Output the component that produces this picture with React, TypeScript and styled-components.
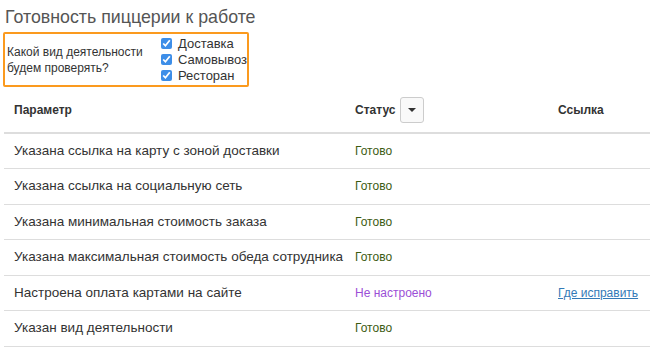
import * as React from 'react';
import styled, {createGlobalStyle} from 'styled-components';

const Global = createGlobalStyle`
    body {
        margin: 0;
        background: #fff;
        font-family: "Liberation Sans", Arial, sans-serif;
        color: #333;
    }
`;

const Page = styled.div`
    padding: 0 0 0 4px;
`;

const Title = styled.h1`
    margin: 0;
    padding: 6px 0 0 1px;
    font-size: 17.8px;
    font-weight: normal;
    line-height: 22px;
    color: #555;
`;

const FilterBox = styled.div`
    display: flex;
    align-items: center;
    width: 240px;
    height: 51px;
    margin: 4px 0 0 -1px;
    padding: 0 0 0 2px;
    border: 2px solid #fb9a1e;
    border-radius: 2px;
`;

const Question = styled.div`
    width: 156px;
    font-size: 12px;
    line-height: 16px;
`;

const Options = styled.div`
    display: flex;
    flex-direction: column;
`;

const Option = styled.label`
    display: flex;
    align-items: center;
    gap: 6px;
    height: 16px;
    font-size: 13px;
`;

const Check = styled.input`
    width: 11px;
    height: 11px;
    margin: 0 0 0 2px;
    accent-color: #3d8ee8;
`;

const Table = styled.table`
    width: 100%;
    margin-top: 2px;
    table-layout: fixed;
    border-collapse: collapse;
    font-size: 13.5px;
`;

const Th = styled.th<{ $w?: number }>`
    width: ${p => (p.$w ? `${p.$w}px` : 'auto')};
    height: 44px;
    padding: 0 10px 2px;
    box-sizing: border-box;
    text-align: left;
    font-size: 12px;
    font-weight: bold;
    white-space: nowrap;
    border-bottom: 2px solid #ddd;
`;

const HeadCell = styled.div`
    display: flex;
    align-items: center;
    gap: 5px;
`;

const DropButton = styled.button`
    display: flex;
    align-items: center;
    justify-content: center;
    width: 24px;
    height: 26px;
    padding: 0;
    background: #f9f9f9;
    border: 1px solid #ccc;
    border-radius: 3px;
    cursor: pointer;
`;

const Caret = styled.span`
    width: 0;
    height: 0;
    border-left: 4px solid transparent;
    border-right: 4px solid transparent;
    border-top: 4px solid #333;
`;

const Row = styled.tr`
    & + & td {
        border-top: 1px solid #ddd;
    }
    &:last-child td {
        border-bottom: 1px solid #ddd;
    }
`;

const Td = styled.td`
    height: 35.5px;
    padding: 0 0 0 10px;
    box-sizing: border-box;
    line-height: 18px;
    white-space: nowrap;
`;

const Status = styled.span<{ $ok: boolean }>`
    font-size: 12px;
    color: ${p => (p.$ok ? '#3d5c12' : '#9b4fd6')};
`;

const FixLink = styled.a`
    font-size: 12px;
    color: #337ab7;
    text-decoration: underline;
`;

const rows = [
    {text: 'Указана ссылка на карту с зоной доставки', ok: true},
    {text: 'Указана ссылка на социальную сеть', ok: true},
    {text: 'Указана минимальная стоимость заказа', ok: true},
    {text: 'Указана максимальная стоимость обеда сотрудника', ok: true},
    {text: 'Настроена оплата картами на сайте', ok: false},
    {text: 'Указан вид деятельности', ok: true},
];

const App: React.FC = () => (
    <Page>
        <Global />
        <Title>Готовность пиццерии к работе</Title>
        <FilterBox>
            <Question>Какой вид деятельности будем проверять?</Question>
            <Options>
                {['Доставка', 'Самовывоз', 'Ресторан'].map(name => (
                    <Option key={name}>
                        <Check type="checkbox" defaultChecked />
                        {name}
                    </Option>
                ))}
            </Options>
        </FilterBox>
        <Table>
            <thead>
                <tr>
                    <Th $w={341}>Параметр</Th>
                    <Th $w={203}>
                        <HeadCell>
                            Статус
                            <DropButton><Caret /></DropButton>
                        </HeadCell>
                    </Th>
                    <Th>Ссылка</Th>
                </tr>
            </thead>
            <tbody>
                {rows.map(r => (
                    <Row key={r.text}>
                        <Td>{r.text}</Td>
                        <Td>
                            <Status $ok={r.ok}>{r.ok ? 'Готово' : 'Не настроено'}</Status>
                        </Td>
                        <Td>{!r.ok && <FixLink href="#">Где исправить</FixLink>}</Td>
                    </Row>
                ))}
            </tbody>
        </Table>
    </Page>
);

export default App;
